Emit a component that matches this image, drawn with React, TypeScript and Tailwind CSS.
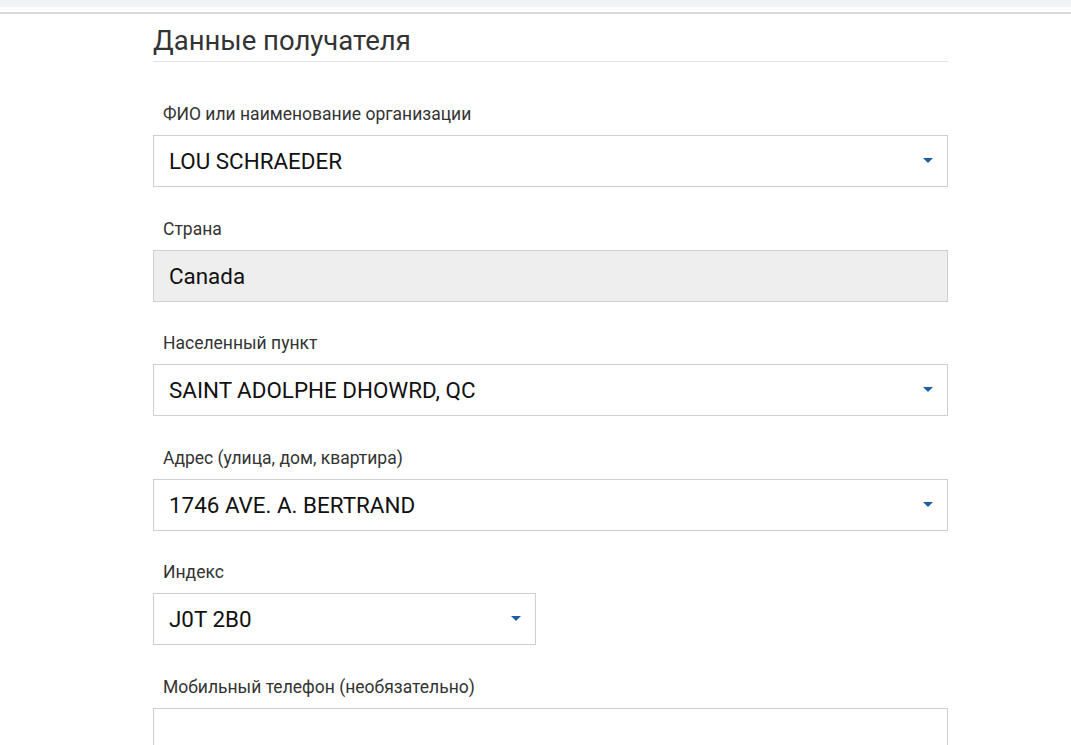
function Caret() {
  return (
    <svg width="10" height="6" viewBox="0 0 10 6" className="shrink-0">
      <path d="M0 0 H10 L5 5 Z" fill="#1d5ea8" />
    </svg>
  );
}

type FieldProps = {
  label: string;
  value?: string;
  select?: boolean;
  disabled?: boolean;
  narrow?: boolean;
};

function Field({ label, value, select, disabled, narrow }: FieldProps) {
  return (
    <div className="flex flex-col">
      <label className="pl-[10px] text-[17.5px] leading-[20px] text-[#333]">{label}</label>
      <div
        className={
          "mt-[11px] flex h-[52px] items-center justify-between border border-[#cfcfcf] pl-[15px] pr-[14px] " +
          (disabled ? "bg-[#eeeeee] " : "bg-white ") +
          (narrow ? "w-[383px]" : "w-full")
        }
      >
        <span className="pt-[2px] text-[22.4px] text-[#111]">{value}</span>
        {select && <Caret />}
      </div>
    </div>
  );
}

export default function App() {
  return (
    <div className="h-[745px] overflow-hidden bg-white font-['Roboto',sans-serif]">
      <div className="h-[7px] bg-[#f1f2f4]" />
      <div className="mt-[5px] h-[2px] bg-[#d9d9d9]" />
      <div className="ml-[153px] w-[795px] pt-[10px]">
        <h2 className="border-b border-[#e3e3e3] pb-[4px] text-[27.5px] leading-[33px] text-[#333]">
          Данные получателя
        </h2>
        <div className="mt-[42px] flex flex-col gap-[31.5px]">
          <Field label="ФИО или наименование организации" value="LOU SCHRAEDER" select />
          <Field label="Страна" value="Canada" disabled />
          <Field label="Населенный пункт" value="SAINT ADOLPHE DHOWRD, QC" select />
          <Field label="Адрес (улица, дом, квартира)" value="1746 AVE. A. BERTRAND" select />
          <Field label="Индекс" value="J0T 2B0" select narrow />
          <Field label="Мобильный телефон (необязательно)" />
        </div>
      </div>
    </div>
  );
}
